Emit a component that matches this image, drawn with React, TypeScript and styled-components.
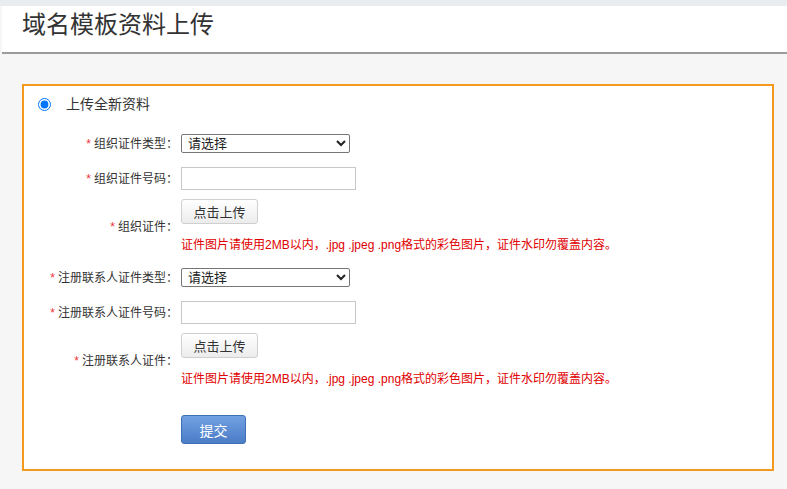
import styled, { createGlobalStyle } from "styled-components";

const GlobalStyle = createGlobalStyle`
  body {
    margin: 0;
    background: #f6f6f6;
    font-family: "Liberation Sans", "Noto Sans CJK SC", sans-serif;
    color: #333;
  }
`;

const TopStrip = styled.div`
  height: 6px;
  background: #e9edf0;
`;

const Header = styled.div`
  margin-left: 2px;
  height: 46px;
  background: #fff;
  border-bottom: 2px solid #9c9c9c;
`;

const Title = styled.h1`
  margin: 0;
  padding-left: 20px;
  font-size: 24px;
  font-weight: 400;
  line-height: 38px;
  color: #333;
`;

const Main = styled.div`
  padding: 30px 13px 20px 22px;
`;

const Box = styled.div`
  border: 2px solid #f39a1e;
  background: #fff;
  padding-bottom: 25px;
`;

const RadioRow = styled.label`
  display: flex;
  align-items: center;
  gap: 15px;
  margin-top: 11px;
  padding-left: 14px;
  height: 14px;
  font-size: 14px;
  line-height: 14px;
  color: #333;

  input {
    margin: 0;
    width: 13px;
    height: 13px;
  }
`;

const Row = styled.div<{ $top: number }>`
  display: grid;
  grid-template-columns: 154px 1fr;
  column-gap: 3px;
  align-items: center;
  margin-top: ${(p) => p.$top}px;
`;

const Label = styled.div`
  text-align: right;
  font-size: 12px;
  line-height: 16px;
  color: #333;
  white-space: nowrap;
`;

const Star = styled.span`
  color: #e33;
  margin-right: 3px;
`;

const Control = styled.div`
  display: flex;
  flex-direction: column;
  align-items: flex-start;
`;

const Select = styled.select`
  width: 169px;
  height: 19px;
  padding: 0 2px;
  font-family: inherit;
  font-size: 13px;
  color: #222;
  border: 1px solid #767676;
  border-radius: 2px;
  background: #fff;
  box-sizing: border-box;
`;

const TextInput = styled.input`
  width: 175px;
  height: 23px;
  border: 1px solid #c8c8c8;
  box-sizing: border-box;
  padding: 0 4px;
  font-size: 12px;
`;

const UploadButton = styled.button`
  width: 77px;
  height: 25px;
  border: 1px solid #cfcfcf;
  border-radius: 3px;
  background: linear-gradient(#ffffff, #ececec);
  font-family: inherit;
  font-size: 13px;
  color: #333;
  padding: 0;
`;

const Hint = styled.div`
  margin-top: 11px;
  font-size: 12px;
  line-height: 20px;
  color: #e00000;
  white-space: nowrap;
`;

const SubmitButton = styled.button`
  width: 65px;
  height: 29px;
  border: 1px solid #3f6fb5;
  border-radius: 3px;
  background: linear-gradient(#72a0e2, #4b7cc6);
  color: #fff;
  font-family: inherit;
  font-size: 14px;
  padding: 0;
`;

const hint = "证件图片请使用2MB以内，.jpg .jpeg .png格式的彩色图片，证件水印勿覆盖内容。";

const FieldLabel = ({ text }: { text: string }) => (
  <Label>
    <Star>*</Star>
    {text}：
  </Label>
);

const TypeSelect = () => (
  <Select defaultValue="">
    <option value="">请选择</option>
  </Select>
);

export default function App() {
  return (
    <>
      <GlobalStyle />
      <TopStrip />
      <Header>
        <Title>域名模板资料上传</Title>
      </Header>
      <Main>
        <Box>
          <RadioRow>
            <input type="radio" name="mode" defaultChecked />
            上传全新资料
          </RadioRow>

          <Row $top={23}>
            <FieldLabel text="组织证件类型" />
            <Control>
              <TypeSelect />
            </Control>
          </Row>
          <Row $top={14}>
            <FieldLabel text="组织证件号码" />
            <Control>
              <TextInput type="text" />
            </Control>
          </Row>
          <Row $top={9}>
            <FieldLabel text="组织证件" />
            <Control>
              <UploadButton type="button">点击上传</UploadButton>
              <Hint>{hint}</Hint>
            </Control>
          </Row>

          <Row $top={13}>
            <FieldLabel text="注册联系人证件类型" />
            <Control>
              <TypeSelect />
            </Control>
          </Row>
          <Row $top={14}>
            <FieldLabel text="注册联系人证件号码" />
            <Control>
              <TextInput type="text" />
            </Control>
          </Row>
          <Row $top={9}>
            <FieldLabel text="注册联系人证件" />
            <Control>
              <UploadButton type="button">点击上传</UploadButton>
              <Hint>{hint}</Hint>
            </Control>
          </Row>

          <Row $top={26}>
            <div />
            <Control>
              <SubmitButton type="button">提交</SubmitButton>
            </Control>
          </Row>
        </Box>
      </Main>
    </>
  );
}
